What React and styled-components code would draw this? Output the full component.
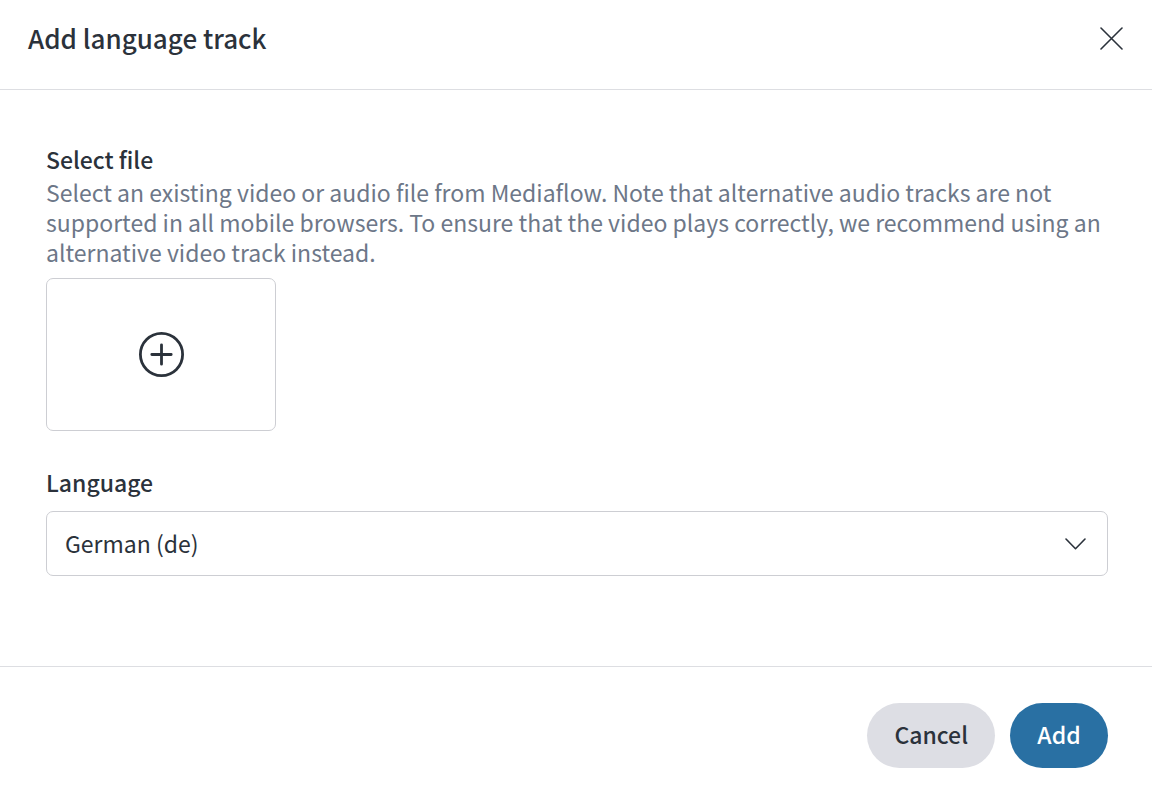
import { useState } from "react";
import styled, { createGlobalStyle } from "styled-components";

export default function App() {

    const [language, setLanguage] = useState("de");

    return (
        <>
        <GlobalStyle />
        <Dialog role="dialog" aria-labelledby="title">
        <Header>
            <Title id="title">Add language track</Title>
            <CloseButton type="button" aria-label="Close">
                <svg width="23" height="23" viewBox="0 0 23 23">
                    <path d="M1 1 22 22M22 1 1 22" />
                </svg>
            </CloseButton>
        </Header>

        <Body>
            <Label as="h2" id="file">Select file</Label>
            <Help>
                Select an existing video or audio file from Mediaflow. Note that alternative audio tracks are not
                supported in all mobile browsers. To ensure that the video plays correctly, we recommend using an
                alternative video track instead.
            </Help>
            <FileButton type="button" aria-labelledby="file">
                <svg width="45" height="45" viewBox="0 0 45 45">
                    <circle cx="22.5" cy="22.5" r="21.1" />
                    <path d="M22.5 12.8v19.4M12.8 22.5h19.4" />
                </svg>
            </FileButton>

            <Label htmlFor="language">Language</Label>
            <SelectBox>
                <Select id="language" value={language} onChange={(e) => setLanguage(e.target.value)}>
                    <option value="de">German (de)</option>
                    <option value="en">English (en)</option>
                    <option value="sv">Swedish (sv)</option>
                </Select>
                <svg width="21" height="12" viewBox="0 0 21 12">
                    <path d="M1 1l9.5 9.7L20 1" />
                </svg>
            </SelectBox>
        </Body>

        <Footer>
            <Button type="button">Cancel</Button>
            <Button type="button" $primary>Add</Button>
        </Footer>
        </Dialog>
        </>
    )
}

const GlobalStyle = createGlobalStyle`

  * {
    box-sizing: border-box;
    margin: 0;
  }

  body, button, select {
    font-family: "Noto Sans CJK SC", "Noto Sans", sans-serif;
    color: #2b323b;
  }

  body {
    background-color: #FFFFFF;
  }

  svg {
    display: block;
    fill: none;
    stroke: #2b323b;
    stroke-linecap: round;
    stroke-linejoin: round;
    stroke-width: 1.6px;
  }

`;

const Dialog = styled.main`

  display: flex;
  flex-direction: column;
  min-height: 100vh;

`;

const Header = styled.header`

  display: flex;
  align-items: flex-start;
  justify-content: space-between;
  padding: 20px 29px 33px 28px;
  border-bottom: 1px solid #dddee2;

`;

const Title = styled.h1`

  font-size: 26px;
  line-height: 36px;
  font-weight: 500;

`;

const CloseButton = styled.button`

  margin-top: 7px;
  padding: 0;
  border: none;
  background: none;
  cursor: pointer;

`;

const Body = styled.section`

  flex: 1;
  padding: 55px 44px 90px 46px;

`;

const Label = styled.label`

  display: block;
  padding-bottom: 4px;
  font-size: 23px;
  line-height: 28px;
  font-weight: 500;

`;

const Help = styled.p`

  font-size: 23px;
  line-height: 30px;
  color: #6d7788;

`;

const FileButton = styled.button`

  display: flex;
  align-items: center;
  justify-content: center;
  width: 230px;
  height: 153px;
  margin: 11px 0 37px;
  border: 1px solid #cdced3;
  border-radius: 7px;
  background-color: #FFFFFF;
  cursor: pointer;

  svg {
    stroke-width: 2.8px;
  }

`;

const SelectBox = styled.div`

  display: grid;
  align-items: center;
  margin-top: 11px;

  > * {
    grid-area: 1 / 1;
  }

  svg {
    justify-self: end;
    margin-right: 22px;
    pointer-events: none;
  }

`;

const Select = styled.select`

  appearance: none;
  width: 100%;
  height: 65px;
  padding: 0 60px 2px 18px;
  border: 1px solid #cdced3;
  border-radius: 7px;
  background-color: #FFFFFF;
  font-size: 23px;

`;

const Footer = styled.footer`

  display: flex;
  justify-content: flex-end;
  gap: 15px;
  padding: 36px 44px 28px;
  border-top: 1px solid #dddee2;

`;

const Button = styled.button`

  min-width: 98px;
  height: 65px;
  padding: 0 27px 4px;
  border: none;
  border-radius: 33px;
  background-color: ${(props) => (props.$primary ? "#2970a3" : "#dddee4")};
  color: ${(props) => (props.$primary ? "#FFFFFF" : "#2b323b")};
  font-size: 23px;
  font-weight: 500;
  cursor: pointer;

`;
